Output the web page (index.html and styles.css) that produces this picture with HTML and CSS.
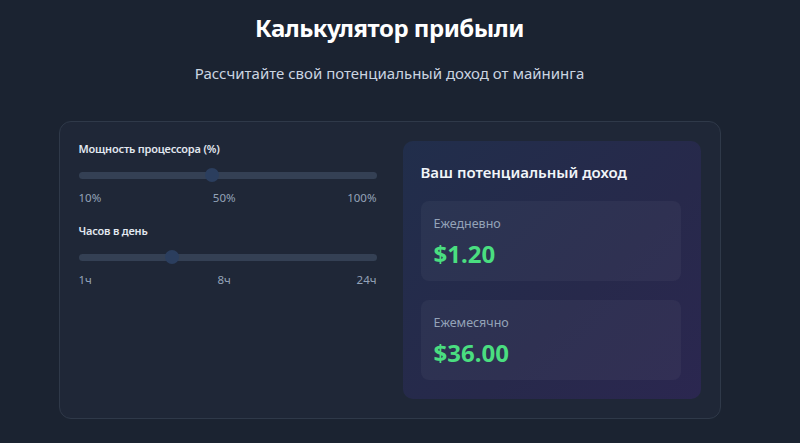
FILE: index.html
```html
<!DOCTYPE html>
<html lang="ru">
<head>
<meta charset="utf-8">
<title>Калькулятор прибыли</title>
<link rel="stylesheet" href="styles.css">
</head>
<body>
<main class="page">
  <header class="hero">
    <h1 class="title">Калькулятор прибыли</h1>
    <p class="subtitle">Рассчитайте свой потенциальный доход от майнинга</p>
  </header>
  <section class="card">
    <div class="controls">
      <div class="field">
        <label class="field-label" for="power">Мощность процессора (%)</label>
        <input class="range" id="power" type="range" min="10" max="100" value="50">
        <div class="ticks"><span>10%</span><span>50%</span><span>100%</span></div>
      </div>
      <div class="field">
        <label class="field-label" for="hours">Часов в день</label>
        <input class="range" id="hours" type="range" min="1" max="24" value="8">
        <div class="ticks"><span>1ч</span><span>8ч</span><span>24ч</span></div>
      </div>
    </div>
    <div class="result">
      <h2 class="result-title">Ваш потенциальный доход</h2>
      <div class="stat">
        <div class="stat-label">Ежедневно</div>
        <div class="stat-value">$1.20</div>
      </div>
      <div class="stat">
        <div class="stat-label">Ежемесячно</div>
        <div class="stat-value">$36.00</div>
      </div>
    </div>
  </section>
</main>
</body>
</html>
```

FILE: styles.css
```css
* { box-sizing: border-box; }
html, body { margin: 0; padding: 0; }
body {
  background: #1b2331;
  font-family: "Noto Sans", "Open Sans", sans-serif;
  color: #e2e8f0;
  width: 800px;
  height: 443px;
  overflow: hidden;
}
.page {
  width: 779px;
  padding-top: 10px;
  display: flex;
  flex-direction: column;
  align-items: center;
}
.hero { text-align: center; }
.title {
  margin: 0;
  font-size: 24px;
  line-height: 36px;
  font-weight: 700;
  letter-spacing: -0.5px;
  color: #ffffff;
}
.subtitle {
  margin: 15px 0 0;
  font-size: 15px;
  line-height: 24px;
  color: #cbd5e1;
}
.card {
  margin-top: 36px;
  width: 662px;
  background: #1f2737;
  border: 1px solid #2f3949;
  border-radius: 12px;
  padding: 19px;
  display: grid;
  grid-template-columns: 1fr 1fr;
  gap: 26px;
}
.controls {
  display: flex;
  flex-direction: column;
  gap: 17px;
}
.field { display: flex; flex-direction: column; }
.field-label {
  font-size: 11px;
  line-height: 16px;
  font-weight: 600;
  letter-spacing: -0.2px;
  color: #e2e8f0;
}
.range {
  -webkit-appearance: none;
  appearance: none;
  width: 100%;
  height: 14px;
  margin: 11px 0 8px;
  background: transparent;
  display: block;
}
.range::-webkit-slider-runnable-track {
  height: 7px;
  border-radius: 4px;
  background: #344054;
}
.range::-webkit-slider-thumb {
  -webkit-appearance: none;
  appearance: none;
  width: 14px;
  height: 14px;
  margin-top: -3.5px;
  border-radius: 50%;
  background: #2b3e5e;
  border: none;
}
.ticks {
  display: flex;
  justify-content: space-between;
  font-size: 11.5px;
  line-height: 16px;
  color: #94a3b8;
}
.result {
  border-radius: 10px;
  background: linear-gradient(135deg, #212e4b 0%, #27294b 60%, #2b2750 100%);
  padding: 19px 20px 19px 18px;
  display: flex;
  flex-direction: column;
  gap: 19px;
}
.result-title {
  margin: 0 0 -2px;
  font-size: 15px;
  line-height: 24px;
  font-weight: 600;
  color: #f1f5f9;
}
.stat {
  height: 80px;
  border-radius: 8px;
  background: rgba(255, 255, 255, 0.04);
  padding: 14px 13px 10px;
}
.stat-label {
  font-size: 12.5px;
  line-height: 18px;
  color: #94a3b8;
}
.stat-value {
  margin-top: 5px;
  font-size: 24px;
  line-height: 32px;
  font-weight: 700;
  color: #4ade80;
}
```
